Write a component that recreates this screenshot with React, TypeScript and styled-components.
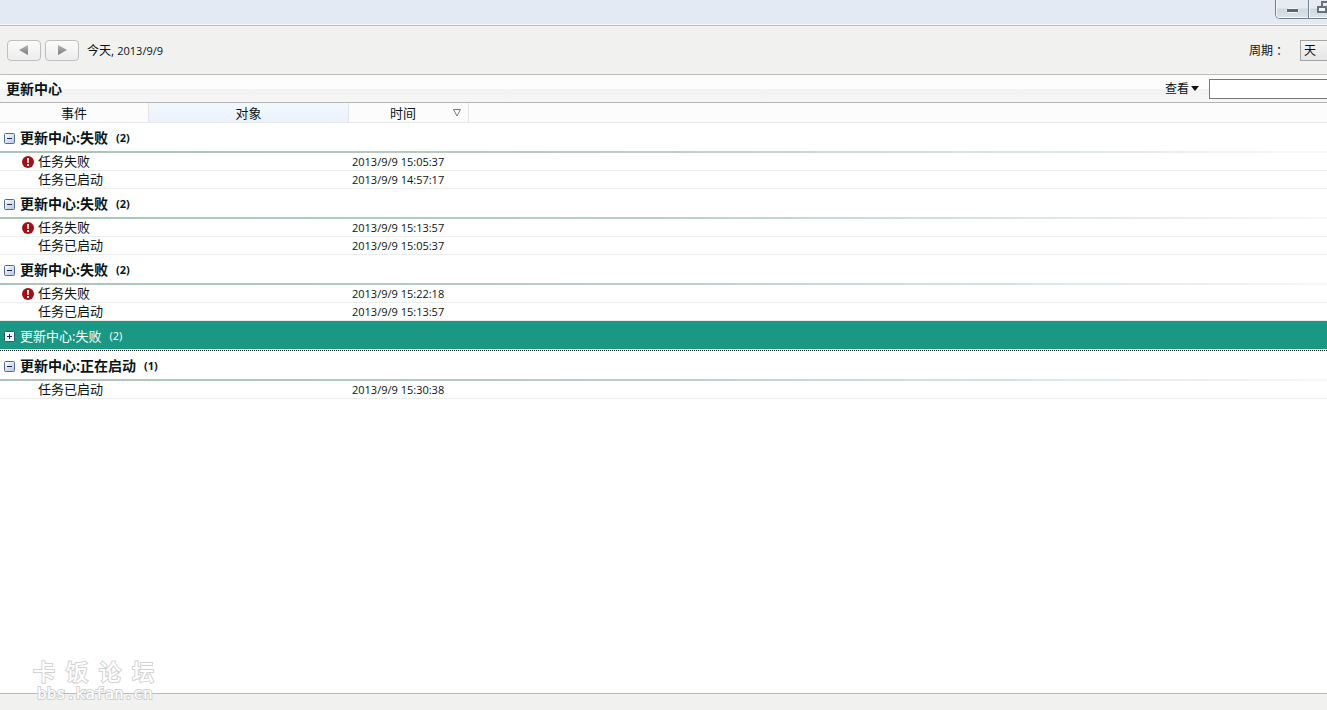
import React, { useState } from "react";
import styled, { createGlobalStyle, css } from "styled-components";

const GlobalStyle = createGlobalStyle`
  * { box-sizing: border-box; }
  body {
    margin: 0;
    overflow: hidden;
    background: #fff;
    color: #0a1414;
    font: 13px/18px "Open Sans", "Noto Sans CJK SC", sans-serif;
  }
  button, input, select { font: inherit; color: inherit; margin: 0; }
`;

const Page = styled.div`
  display: flex;
  flex-direction: column;
  min-height: 100vh;
  position: relative;
`;

const TitleBar = styled.header`
  display: flex;
  justify-content: flex-end;
  align-items: flex-start;
  height: 26px;
  background: linear-gradient(#e3eaf3 0 24px, #fbfbfb 24px 25px, #bcbcbc 25px);
`;

const WindowButtons = styled.div`
  display: flex;
  width: 52px;
  height: 19px;
  overflow: hidden;
  border: solid #75808c;
  border-width: 0 0 1px 1px;
  border-bottom-left-radius: 5px;
`;

const WindowButton = styled.button`
  flex: 0 0 33px;
  height: 18px;
  padding: 0;
  border: 0;
  border-right: 1px solid #75808c;
  background: linear-gradient(#e6ebf1 0 8px, #ced8e0 9px, #dbe4ea);
  box-shadow: inset 1px -1px 0 #f3f7fa;
  svg { display: block; }
`;

const Toolbar = styled.div`
  display: flex;
  align-items: center;
  height: 49px;
  padding-left: 7px;
  gap: 4px;
  background: #f1f1ef;
  border-bottom: 1px solid #bdbdbd;
`;

const StepButton = styled.button`
  display: grid;
  place-items: center;
  width: 34px;
  height: 21px;
  padding: 0;
  border: 1px solid #bfbfbf;
  border-radius: 4px;
  background: linear-gradient(#fbfbfb, #ededed);
`;

const Latin = styled.span`
  font-size: 11px;
`;

const Period = styled.div`
  padding: 2px 0 0 4px;
  font-size: 12px;
`;

const RangeField = styled.label`
  display: flex;
  align-items: center;
  gap: 12px;
  margin-left: auto;
  font-size: 12px;
`;

const RangeLabel = styled.span`
  padding-top: 2px;
`;

const RangeSelect = styled.select`
  appearance: none;
  width: 27px;
  height: 21px;
  padding: 1px 0 0 3px;
  border: 1px solid #a5a5a5;
  border-right: 0;
  border-radius: 0;
  background: linear-gradient(#f4f4f4, #e6e6e6);
  line-height: 18px;
`;

const SectionBar = styled.div`
  display: flex;
  align-items: center;
  height: 28px;
  padding-left: 6px;
  border-bottom: 1px solid #b4b4b4;
  background: linear-gradient(#fdfdfd 0 14px, #f2f2f2 14px, #f6f6f6);
`;

const SectionTitle = styled.h1`
  margin: 0;
  font-size: 14px;
  line-height: 18px;
  font-weight: 700;
`;

const ViewButton = styled.button`
  display: flex;
  align-items: center;
  gap: 2px;
  margin-left: auto;
  padding: 0 10px 0 0;
  border: 0;
  background: none;
  font-size: 12px;
`;

const SearchBox = styled.input`
  width: 118px;
  height: 20px;
  padding: 0 4px;
  border: 1px solid #77787a;
  border-right: 0;
  background: #fff;
`;

const EventTable = styled.table`
  width: 100%;
  table-layout: fixed;
  border-spacing: 0;
`;

const Column = styled.col<{ $width?: number }>`
  width: ${(p) => (p.$width ? `${p.$width}px` : "auto")};
`;

const ColumnHead = styled.th<{ $hot?: boolean; $open?: boolean }>`
  height: 20px;
  padding: 0;
  border-bottom: 1px solid #e6e8ec;
  border-right: ${(p) => (p.$open ? "0" : "1px solid #e2e4e8")};
  background: ${(p) => (p.$hot ? "linear-gradient(#f3f8fe, #ebf2fb)" : "#fcfcfc")};
  font-weight: 400;
`;

const HeadInner = styled.div`
  display: flex;
  justify-content: center;
  align-items: center;
  padding: 0 7px 0 4px;
`;

const SortLabel = styled.span`
  flex: 1;
  text-align: center;
`;

const GroupHead = styled.th<{ $selected?: boolean }>`
  height: 30px;
  padding: 0 0 0 4px;
  text-align: left;
  ${(p) =>
    p.$selected
      ? css`
          color: #fff;
          font-weight: 400;
          background:
            repeating-linear-gradient(90deg, #111 0 1px, #fff 1px 2px) 0 29px / 100% 1px no-repeat,
            repeating-linear-gradient(90deg, #6b6f6d 0 1px, #1b9884 1px 2px) 0 0 / 100% 1px no-repeat,
            linear-gradient(#1b9884 0 28px, #e6f4f1 28px);
        `
      : css`
          font-weight: 700;
          background: linear-gradient(90deg, #a9c5b6, #bccfc5 50%, #f6f8f7) 0 28px / 100% 2px no-repeat;
        `}
`;

const Toggle = styled.button`
  display: flex;
  align-items: center;
  gap: 5px;
  padding: 0;
  border: 0;
  background: none;
  font-weight: inherit;
`;

const GroupText = styled.span<{ $selected?: boolean }>`
  font-size: ${(p) => (p.$selected ? 13 : 14)}px;
`;

const Count = styled(Latin)`
  padding-left: 3px;
`;

const Cell = styled.td`
  height: 18px;
  padding: 0 0 0 3px;
  border-bottom: 1px solid #ebeded;
  line-height: 17px;
`;

const EventName = styled.div`
  display: grid;
  grid-template-columns: 12px 1fr;
  align-items: center;
  column-gap: 4px;
  padding-left: 19px;
`;

const EventLabel = styled.span`
  grid-column: 2;
`;

const Footer = styled.footer`
  height: 17px;
  margin-top: auto;
  border-top: 1px solid #b9b9b9;
  background: #f1f1ef;
`;

const Watermark = styled.div`
  position: absolute;
  left: 33px;
  bottom: 9px;
  color: #fff;
  -webkit-text-stroke: 2px #d2d2d2;
  paint-order: stroke fill;
  pointer-events: none;
`;

const WatermarkName = styled.div`
  display: flex;
  gap: 11px;
  padding-bottom: 3px;
  font: 500 22px/28px "Noto Sans CJK SC", sans-serif;
`;

const WatermarkSite = styled.div`
  padding-left: 4px;
  font: 16px/14px "DejaVu Sans Mono", monospace;
`;

type Entry = { name: string; time: string; failed?: boolean };
type Group = { title: string; count: number; entries: Entry[] };

const groups: Group[] = [
  {
    title: "更新中心:失败",
    count: 2,
    entries: [
      { name: "任务失败", time: "2013/9/9 15:05:37", failed: true },
      { name: "任务已启动", time: "2013/9/9 14:57:17" },
    ],
  },
  {
    title: "更新中心:失败",
    count: 2,
    entries: [
      { name: "任务失败", time: "2013/9/9 15:13:57", failed: true },
      { name: "任务已启动", time: "2013/9/9 15:05:37" },
    ],
  },
  {
    title: "更新中心:失败",
    count: 2,
    entries: [
      { name: "任务失败", time: "2013/9/9 15:22:18", failed: true },
      { name: "任务已启动", time: "2013/9/9 15:13:57" },
    ],
  },
  { title: "更新中心:失败", count: 2, entries: [] },
  {
    title: "更新中心:正在启动",
    count: 1,
    entries: [{ name: "任务已启动", time: "2013/9/9 15:30:38" }],
  },
];

const ExpandIcon = ({ open }: { open: boolean }) => (
  <svg width="11" height="11" viewBox="0 0 11 11" aria-hidden="true">
    <defs>
      <linearGradient id="box" x1="0" y1="0" x2="1" y2="1">
        <stop offset="0" stopColor="#fff" />
        <stop offset="1" stopColor="#b4c4e4" />
      </linearGradient>
    </defs>
    <rect x=".5" y=".5" width="10" height="10" rx="1" fill={open ? "url(#box)" : "#f4f7fc"} stroke={open ? "#566b92" : "#245f70"} />
    <path d={open ? "M3 5.5h5" : "M3 5.5h5M5.5 3v5"} stroke="#16284e" />
  </svg>
);

const ErrorIcon = () => (
  <svg width="12" height="12" viewBox="0 0 12 12" role="img" aria-label="错误">
    <circle cx="6" cy="6" r="6" fill="#a80d14" />
    <path d="M5 2h2l-.3 5H5.3z" fill="#fff" />
    <rect x="5" y="8" width="2" height="2" fill="#fff" />
  </svg>
);

const Arrow = ({ next }: { next?: boolean }) => (
  <svg width="10" height="10" viewBox="0 0 10 10" aria-hidden="true">
    <defs>
      <linearGradient id="arrow" x1="0" y1="0" x2="0" y2="1">
        <stop offset="0" stopColor="#b4b4b4" />
        <stop offset="1" stopColor="#7c7c7c" />
      </linearGradient>
    </defs>
    <path d={next ? "M1 0v10L10 5z" : "M9 0v10L0 5z"} fill="url(#arrow)" />
  </svg>
);

export default function App() {
  const [open, setOpen] = useState([true, true, true, false, true]);
  const toggle = (i: number) => setOpen(open.map((o, n) => (n === i ? !o : o)));

  return (
    <Page>
      <GlobalStyle />
      <TitleBar>
        <WindowButtons>
          <WindowButton aria-label="最小化">
            <svg width="32" height="18" viewBox="0 0 32 18">
              <rect x="10.5" y="8.5" width="12" height="4" rx="1" fill="#5b6672" stroke="#f4f7f9" />
            </svg>
          </WindowButton>
          <WindowButton aria-label="还原">
            <svg width="32" height="18" viewBox="0 0 32 18">
              <path d="M13 6V2h9v7h-4" fill="none" stroke="#66717c" strokeWidth="2" />
              <path d="M9 7h8v5H9z" fill="#f5f7f9" stroke="#66717c" strokeWidth="2" />
            </svg>
          </WindowButton>
        </WindowButtons>
      </TitleBar>
      <Toolbar>
        <StepButton aria-label="前一天"><Arrow /></StepButton>
        <StepButton aria-label="后一天"><Arrow next /></StepButton>
        <Period>今天, <Latin>2013/9/9</Latin></Period>
        <RangeField>
          <RangeLabel>周期 ：</RangeLabel>
          <RangeSelect defaultValue="天">
            <option>天</option>
          </RangeSelect>
        </RangeField>
      </Toolbar>
      <SectionBar>
        <SectionTitle>更新中心</SectionTitle>
        <ViewButton>
          查看
          <svg width="8" height="5" viewBox="0 0 8 5" aria-hidden="true"><path d="M0 0h8L4 5z" fill="#111" /></svg>
        </ViewButton>
        <SearchBox type="text" aria-label="搜索" />
      </SectionBar>
      <EventTable>
        <colgroup>
          <Column $width={149} />
          <Column $width={200} />
          <Column $width={120} />
          <Column />
        </colgroup>
        <thead>
          <tr>
            <ColumnHead>事件</ColumnHead>
            <ColumnHead $hot>对象</ColumnHead>
            <ColumnHead>
              <HeadInner>
                <SortLabel>时间</SortLabel>
                <svg width="8" height="8" viewBox="0 0 8 8" aria-hidden="true">
                  <path d="M.5 .5h7L4 7z" fill="#fff" stroke="#777" />
                </svg>
              </HeadInner>
            </ColumnHead>
            <ColumnHead as="td" $open />
          </tr>
        </thead>
        {groups.map((g, i) => {
          const selected = i === 3;
          return (
            <tbody key={i}>
              <tr>
                <GroupHead colSpan={4} $selected={selected}>
                  <Toggle aria-expanded={open[i]} onClick={() => toggle(i)}>
                    <ExpandIcon open={open[i]} />
                    <GroupText $selected={selected}>{g.title}</GroupText>
                    <Count>({g.count})</Count>
                  </Toggle>
                </GroupHead>
              </tr>
              {open[i] &&
                g.entries.map((e) => (
                  <tr key={e.time}>
                    <Cell>
                      <EventName>
                        {e.failed && <ErrorIcon />}
                        <EventLabel>{e.name}</EventLabel>
                      </EventName>
                    </Cell>
                    <Cell />
                    <Cell><Latin>{e.time}</Latin></Cell>
                    <Cell />
                  </tr>
                ))}
            </tbody>
          );
        })}
      </EventTable>
      <Footer />
      <Watermark>
        <WatermarkName>
          <span>卡</span>
          <span>饭</span>
          <span>论</span>
          <span>坛</span>
        </WatermarkName>
        <WatermarkSite>bbs.kafan.cn</WatermarkSite>
      </Watermark>
    </Page>
  );
}
